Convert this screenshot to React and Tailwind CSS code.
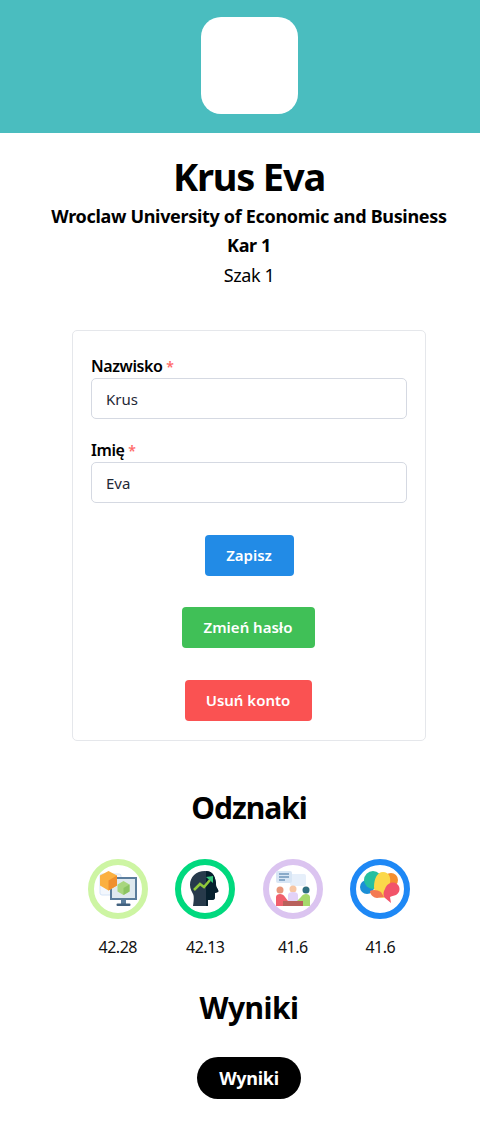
function CubesBadge() {
  return (
    <svg viewBox="0 0 60 60" className="w-[60px] h-[60px]">
      <circle cx="30" cy="30" r="27" fill="#fff" stroke="#cdf5a3" strokeWidth="6" />
      <rect x="12" y="15" width="21" height="21" rx="2" fill="#f3f7fd" stroke="#d5e4f7" strokeWidth="1" />
      <rect x="23" y="19" width="25" height="21" fill="#dfe9ef" stroke="#5b7d9c" strokeWidth="2" />
      <path d="M35.500 22l6 3.500v7l-6 3.500-6-3.500v-7z" fill="#a8d67e" />
      <path d="M35.500 29l6-3.500v7l-6 3.500z" fill="#8cc463" />
      <rect x="33" y="41" width="5" height="4" fill="#5b7d9c" />
      <rect x="28.500" y="44.500" width="14" height="2.500" rx="1" fill="#42617f" />
      <path d="M20.500 12l8.500 4.500v10l-8.500 5-8.500-5v-10z" fill="#fbb040" />
      <path d="M20.500 21.500l8.500-5v10l-8.500 5z" fill="#f08f2c" />
    </svg>
  )
}

function HeadBadge() {
  return (
    <svg viewBox="0 0 60 60" className="w-[60px] h-[60px]">
      <circle cx="30" cy="30" r="27" fill="#fff" stroke="#00d97e" strokeWidth="6" />
      <path d="M30 12c-9 0-15 6-15 14 0 4 2 7 3 9 1 2 1 5 0 12h15v-6h4c2 0 3-1 3-3v-4l3-1c1-1 0-2-1-4-1-1-1-3-1-5-1-8-4-12-11-12z" fill="#273a4b" />
      <path d="M31 12c6 0 9 4 10 12 0 2 0 4 1 5 1 2 2 3 1 4l-3 1v4c0 2-1 3-3 3h-4v6h-2z" fill="#06202e" />
      <path d="M19 31l6-6 4 3 6-7" fill="none" stroke="#8fc93a" strokeWidth="2.500" />
      <path d="M31 18l7-1v7z" fill="#34c77b" />
    </svg>
  )
}

function MeetingBadge() {
  return (
    <svg viewBox="0 0 60 60" className="w-[60px] h-[60px]">
      <circle cx="30" cy="30" r="27" fill="#fff" stroke="#dbc4f0" strokeWidth="6" />
      <rect x="27" y="15" width="16" height="12" rx="2" fill="#e6effa" />
      <rect x="13" y="12" width="16" height="12" rx="2" fill="#d8e6f5" />
      <path d="M16 15h10M16 18h10M16 21h6" stroke="#6f97ba" strokeWidth="1.300" />
      <circle cx="17" cy="31" r="3.500" fill="#e8967a" />
      <path d="M13 47v-9c0-2 2-3 4-3s4 1 5 3l3 4-5 5z" fill="#f0606d" />
      <circle cx="30" cy="30" r="3.500" fill="#f7c6a3" />
      <path d="M25 42v-6c0-2 2-3 5-3s5 1 5 3v6z" fill="#e3d2f7" />
      <circle cx="43" cy="31" r="3.500" fill="#2f6f80" />
      <path d="M47 47v-9c0-2-2-3-4-3s-4 1-5 3l-4 4 4 5z" fill="#a6d96c" />
      <rect x="20" y="42" width="20" height="5" fill="#b8615c" />
    </svg>
  )
}

function BrainBadge() {
  return (
    <svg viewBox="0 0 60 60" className="w-[60px] h-[60px]">
      <circle cx="30" cy="30" r="27" fill="#fff" stroke="#1e88f5" strokeWidth="6" />
      <circle cx="17" cy="28" r="7" fill="#1c8fd6" />
      <circle cx="41" cy="21" r="7" fill="#f58f30" />
      <circle cx="23" cy="21" r="9" fill="#26bfa0" />
      <path d="M24 28c0-8 3-15 9-15 6 0 8 5 7 11-1 5 2 9-2 13-4 3-11 2-13-2z" fill="#fbd84a" />
      <path d="M35 30c2-6 8-8 12-5 4 3 3 9-1 11-2 1-5 1-6 2l1 6-6-5c-2-2-2-6 0-9z" fill="#f2546a" />
      <path d="M20 32c3-2 8-1 11 1l3 5-7 1c-3 0-7-3-7-7z" fill="#f47a52" />
    </svg>
  )
}

const badges = [
  { Icon: CubesBadge, score: '42.28' },
  { Icon: HeadBadge, score: '42.13' },
  { Icon: MeetingBadge, score: '41.6' },
  { Icon: BrainBadge, score: '41.6' },
]

function Field({ label, value }) {
  return (
    <div>
      <label className="block text-base font-semibold leading-[22px] tracking-[-0.4px] text-black">
        {label} <span className="text-sm text-[#ff6b6b]">*</span>
      </label>
      <input
        readOnly
        value={value}
        className="mt-[1px] block w-full h-[41px] px-[14px] rounded-[5px] border border-[#d5d9e2] bg-white text-[15px] text-[#1f2937] font-['Noto_Sans',sans-serif]"
      />
    </div>
  )
}

export default function App() {
  return (
    <div className="w-full h-[1121px] overflow-hidden bg-white font-['Noto_Sans',sans-serif] text-black">
      <div className="w-[498px]">
        <div className="h-[133px] bg-[#4abdbf] flex justify-center pt-[17px]">
          <div className="w-[97px] h-[97px] bg-white rounded-[20px]" />
        </div>

        {/* Name */}
        <div className="flex flex-col items-center pt-[16px]">
          <h1 className="text-[38px] leading-[54px] font-bold tracking-[-1.2px]">Krus Eva</h1>
          <p className="text-[18px] leading-[24px] font-bold tracking-[-0.32px] mt-[1px]">Wroclaw University of Economic and Business</p>
          <p className="text-[18px] leading-[24px] font-bold tracking-[-0.4px] mt-[5px]">Kar 1</p>
          <p className="text-[18px] leading-[24px] tracking-[-0.4px] mt-[6px]">Szak 1</p>
        </div>

        {/* Form card */}
        <div className="mx-[72px] mt-[43px] h-[411px] rounded-[5px] border border-[#e5e7eb] px-[18px] pt-[24px]">
          <div className="flex flex-col gap-[20px]">
            <Field label="Nazwisko" value="Krus" />
            <Field label="Imię" value="Eva" />
          </div>
          <div className="flex flex-col items-center mt-[32px]">
            <button className="h-[41px] w-[89px] rounded-[4px] bg-[#228be6] text-white text-[15px] font-semibold">Zapisz</button>
            <button className="mt-[31px] mr-[2px] h-[41px] w-[133px] rounded-[4px] bg-[#40c057] text-white text-[15px] font-semibold">Zmień hasło</button>
            <button className="mt-[32px] mr-[2px] h-[41px] w-[127px] rounded-[4px] bg-[#fa5252] text-white text-[15px] font-semibold">Usuń konto</button>
          </div>
        </div>

        {/* Badges */}
        <h2 className="text-center text-[30px] leading-[45px] font-bold mt-[44px] tracking-[-1px]">Odznaki</h2>
        <div className="flex justify-center gap-[27.500px] mt-[29px]">
          {badges.map(({ Icon, score }, i) => (
            <div key={i} className="flex flex-col items-center w-[60px]">
              <Icon />
              <span className="mt-[16px] text-base leading-[24px] tracking-[-0.5px] text-[#111]">{score}</span>
            </div>
          ))}
        </div>

        {/* Results */}
        <h2 className="text-center text-[30px] leading-[45px] font-bold mt-[26px] tracking-[-0.5px]">Wyniki</h2>
        <div className="flex justify-center mt-[27px]">
          <button className="h-[42px] w-[104px] rounded-full bg-black text-white text-[18px] font-bold tracking-[-0.3px]">Wyniki</button>
        </div>
      </div>
    </div>
  )
}
